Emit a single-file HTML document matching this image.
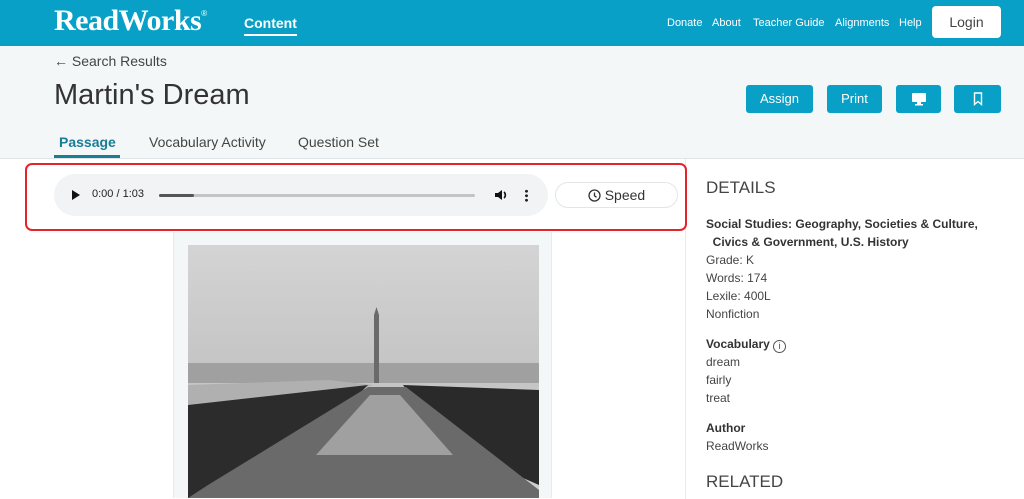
<!DOCTYPE html>
<html><head><meta charset="utf-8"><style>
*{margin:0;padding:0;box-sizing:border-box}
body{width:1024px;height:498px;overflow:hidden;background:#fff;font-family:"Liberation Sans",Arial,sans-serif;color:#333;position:relative}
.hdr{position:absolute;left:0;top:0;width:1024px;height:46px;background:#08a0c6}
.logo{position:absolute;left:54px;top:4px;font-family:"Liberation Serif",serif;font-weight:bold;font-size:30px;color:#fff;letter-spacing:-0.5px}
.logo sup{font-size:8px;font-family:"Liberation Sans";font-weight:normal;vertical-align:top;position:relative;top:5px}
.content{position:absolute;left:244px;top:15px;color:#fff;font-weight:bold;font-size:14px;border-bottom:2px solid #fff;padding-bottom:3px}
.nav{position:absolute;top:17px;color:#fff;font-size:11px}
.login{position:absolute;left:932px;top:6px;width:69px;height:32px;background:#fff;border-radius:4px;color:#444;font-size:14px;text-align:center;line-height:32px}
.band{position:absolute;left:0;top:46px;width:1024px;height:113px;background:#f4f7f8;border-bottom:1px solid #dfe5e8}
.back{position:absolute;left:54px;top:53px;font-size:14px;color:#444}
h1{position:absolute;left:54px;top:79px;font-weight:normal;font-size:29px;color:#333}
.tab{position:absolute;top:134px;font-size:14px;color:#444}
.btn{position:absolute;top:85px;height:28px;background:#08a0c6;border-radius:3px;color:#fff;font-size:13px;text-align:center;line-height:28px}
.red{position:absolute;left:25px;top:163px;width:662px;height:68px;border:2px solid #e3242b;border-radius:7px}
.player{position:absolute;left:54px;top:174px;width:494px;height:42px;background:#f1f3f4;border-radius:21px}
.speed{position:absolute;left:555px;top:182px;width:123px;height:26px;border:1px solid #e2e6e8;border-radius:13px;font-size:14px;color:#333;text-align:center;line-height:24px}
.vline{position:absolute;left:685px;top:159px;width:1px;height:340px;background:#e6ebed}
.card{position:absolute;left:173px;top:232px;width:379px;height:266px;background:#f4f7f8;border-left:1px solid #e6ebed;border-right:1px solid #e6ebed}
.side{position:absolute;left:706px;font-size:12px;color:#444}
.side b{color:#333}
</style></head><body>
<div class="hdr">
<div class="logo">ReadWorks<sup>®</sup></div>
<div class="content">Content</div>
<div class="nav" style="left:667px">Donate</div>
<div class="nav" style="left:712px">About</div>
<div class="nav" style="left:753px">Teacher Guide</div>
<div class="nav" style="left:835px">Alignments</div>
<div class="nav" style="left:899px">Help</div>
<div class="login">Login</div>
</div>
<div class="band"></div>
<div class="back">← Search Results</div>
<h1>Martin's Dream</h1>
<div class="tab" style="left:59px;color:#1a7d96;font-weight:bold;">Passage</div>
<div style="position:absolute;left:54px;top:155px;width:66px;height:3px;background:#1a7d96"></div>
<div class="tab" style="left:149px">Vocabulary Activity</div>
<div class="tab" style="left:298px">Question Set</div>
<div class="btn" style="left:746px;width:67px">Assign</div>
<div class="btn" style="left:827px;width:55px">Print</div>
<div class="btn" style="left:896px;width:45px"><svg width="16" height="14" viewBox="0 0 16 14" style="margin-top:7px"><rect x="1" y="1" width="14" height="9" rx="1" fill="#fff"/><rect x="6" y="10" width="4" height="2" fill="#fff"/><rect x="4" y="12" width="8" height="1.5" fill="#fff"/></svg></div>
<div class="btn" style="left:954px;width:47px"><svg width="10" height="14" viewBox="0 0 10 14" style="margin-top:7px"><path d="M1.5 1h7v11.5L5 9.5 1.5 12.5z" fill="none" stroke="#fff" stroke-width="1.4"/></svg></div>
<div class="vline"></div>
<div class="card">
<svg width="351" height="253" viewBox="0 0 351 253" style="position:absolute;left:14px;top:13px">
<defs><linearGradient id="s" x1="0" y1="0" x2="0" y2="1"><stop offset="0" stop-color="#d4d4d4"/><stop offset="0.5" stop-color="#c4c4c4"/><stop offset="1" stop-color="#cfcfcf"/></linearGradient></defs>
<rect width="351" height="253" fill="url(#s)"/>
<rect y="118" width="351" height="20" fill="#a0a0a0"/>
<path d="M0 140 L140 135 L185 140 L0 200Z" fill="#b0b0b0"/>
<path d="M0 160 L180 140 L130 190 L60 253 L0 253Z" fill="#2c2c2c"/>
<path d="M351 145 L215 140 L260 200 L351 240Z" fill="#2a2a2a"/>
<path d="M180 142 L218 142 L351 245 L351 253 L0 253 L20 240 Z" fill="#6a6a6a"/>
<path d="M182 150 L212 150 L265 210 L128 210Z" fill="#a0a0a0"/>
<rect x="186" y="70" width="5" height="68" fill="#6a6a6a"/>
<path d="M186 70 L188.5 62 L191 70Z" fill="#6a6a6a"/>
</svg>
</div>
<div class="red"></div>
<div class="player">
<svg width="10" height="12" style="position:absolute;left:17px;top:15px"><path d="M1 1 L9 6 L1 11Z" fill="#111"/></svg>
<div style="position:absolute;left:38px;top:14px;font-size:11px;color:#222">0:00 / 1:03</div>
<div style="position:absolute;left:105px;top:20px;width:316px;height:3px;background:#c2c4c6;border-radius:2px"></div>
<div style="position:absolute;left:105px;top:20px;width:35px;height:3px;background:#555;border-radius:2px"></div>
<svg width="14" height="14" style="position:absolute;left:440px;top:14px"><path d="M1 5h3l4-3v10l-4-3H1z" fill="#111"/><path d="M10 4a4 4 0 0 1 0 6" stroke="#111" stroke-width="1.6" fill="none"/></svg>
<div style="position:absolute;left:471px;top:15px;width:3px;height:13px;background:radial-gradient(circle,#222 1.3px,transparent 1.6px) 0 0/3px 4.5px"></div>
</div>
<div class="speed"><svg width="13" height="13" style="vertical-align:-2px"><circle cx="6.5" cy="6.5" r="5.5" fill="none" stroke="#333" stroke-width="1.3"/><path d="M6.5 3.5v3.3l2 1.5" stroke="#333" stroke-width="1.3" fill="none"/></svg> Speed</div>
<div class="side" style="top:178px;font-size:17px">DETAILS</div>
<div class="side" style="top:215px;line-height:18px"><b>Social Studies: Geography, Societies &amp; Culture,<br>&nbsp;&nbsp;Civics &amp; Government, U.S. History</b><br>Grade: K<br>Words: 174<br>Lexile: 400L<br>Nonfiction</div>
<div class="side" style="top:335px;line-height:18px"><b>Vocabulary</b> <span style="display:inline-block;width:13px;height:13px;border:1px solid #555;border-radius:50%;font-size:9px;text-align:center;line-height:11px;vertical-align:-1px">i</span><br>dream<br>fairly<br>treat</div>
<div class="side" style="top:419px;line-height:18px"><b>Author</b><br>ReadWorks</div>
<div class="side" style="top:472px;font-size:17px">RELATED</div>
</body></html>
